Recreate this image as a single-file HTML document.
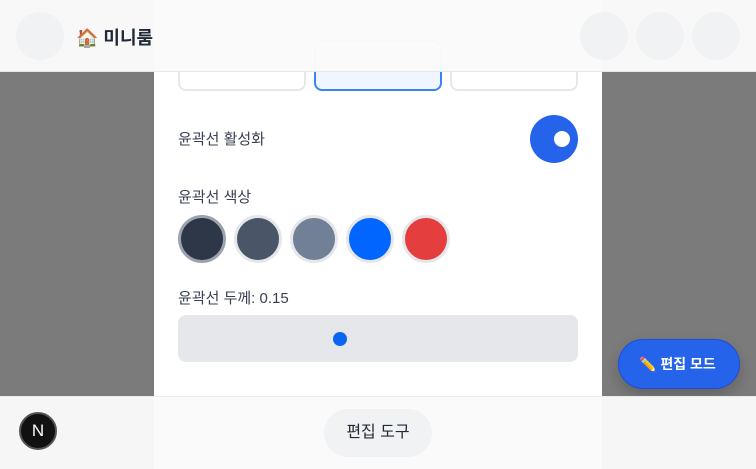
<!DOCTYPE html>
<html><head><meta charset="utf-8"><style>
*{margin:0;padding:0;box-sizing:border-box}
body{width:756px;height:469px;overflow:hidden;position:relative;background:#7b7b7b;font-family:"Liberation Sans","Noto Sans CJK KR",sans-serif;color:#374151}
.panel{position:absolute;left:154px;top:0;width:448px;height:469px;background:#fff}
.abs{position:absolute}
.opt{position:absolute;top:40px;width:128px;height:51px;border:2px solid #e5e7eb;border-radius:8px;background:#fff}
.lbl{position:absolute;left:178px;font-size:15px;color:#374151}
.sw{position:absolute;top:215px;width:48px;height:48px;border-radius:50%;border:3px solid #e5e7eb}
.hdr{position:absolute;left:0;top:0;width:756px;height:72px;background:rgba(250,250,250,0.985);border-bottom:1px solid #e8e8e8}
.c{position:absolute;width:48px;height:48px;border-radius:50%;background:#f1f2f4}
.bot{position:absolute;left:0;top:396px;width:756px;height:73px;background:rgba(250,250,250,0.97);border-top:1px solid #ececec}
</style></head><body>
<div class="panel"></div>
<div class="opt" style="left:178px"></div>
<div class="opt" style="left:314px;border-color:#3b82f6;background:#eff6ff"></div>
<div class="opt" style="left:450px"></div>
<div class="lbl" style="top:128px">윤곽선 활성화</div>
<div class="abs" style="left:530px;top:115px;width:48px;height:48px;border-radius:50%;background:#2563eb"></div>
<div class="abs" style="left:554px;top:131px;width:16px;height:16px;border-radius:50%;background:#fff"></div>
<div class="lbl" style="top:186px">윤곽선 색상</div>
<div class="sw" style="left:178px;background:#2d3748;border-color:#9ca3af"></div>
<div class="sw" style="left:234px;background:#4a5568"></div>
<div class="sw" style="left:290px;background:#718096"></div>
<div class="sw" style="left:346px;background:#0066ff"></div>
<div class="sw" style="left:402px;background:#e53e3e"></div>
<div class="lbl" style="top:287px">윤곽선 두께: 0.15</div>
<div class="abs" style="left:178px;top:315px;width:400px;height:47px;border-radius:8px;background:#e5e7eb"></div>
<div class="abs" style="left:333px;top:332px;width:14px;height:14px;border-radius:50%;background:#0a66f0"></div>
<div class="hdr">
<div class="c" style="left:16px;top:12px"></div>
<div class="abs" style="left:76px;top:24px;font-size:18px;font-weight:bold;color:#1f2937">🏠 미니룸</div>
<div class="c" style="left:580px;top:12px"></div>
<div class="c" style="left:636px;top:12px"></div>
<div class="c" style="left:692px;top:12px"></div>
</div>
<div class="abs" style="left:618px;top:339px;width:122px;height:50px;border-radius:25px;background:#2563eb;border:1px solid #1d4ed8;color:#fff;font-size:14px;font-weight:bold;line-height:48px;padding-left:20px;box-shadow:0 6px 14px rgba(0,0,0,.2)">✏️ 편집 모드</div>
<div class="bot">
<div class="abs" style="left:19px;top:15px;width:38px;height:38px;border-radius:50%;background:#111;border:2px solid #555;color:#fff;font-size:17px;text-align:center;line-height:34px">N</div>
<div class="abs" style="left:324px;top:12px;width:108px;height:48px;border-radius:24px;background:#f1f2f4;color:#1f2937;font-size:16px;text-align:center;line-height:48px">편집 도구</div>
</div>
</body></html>
